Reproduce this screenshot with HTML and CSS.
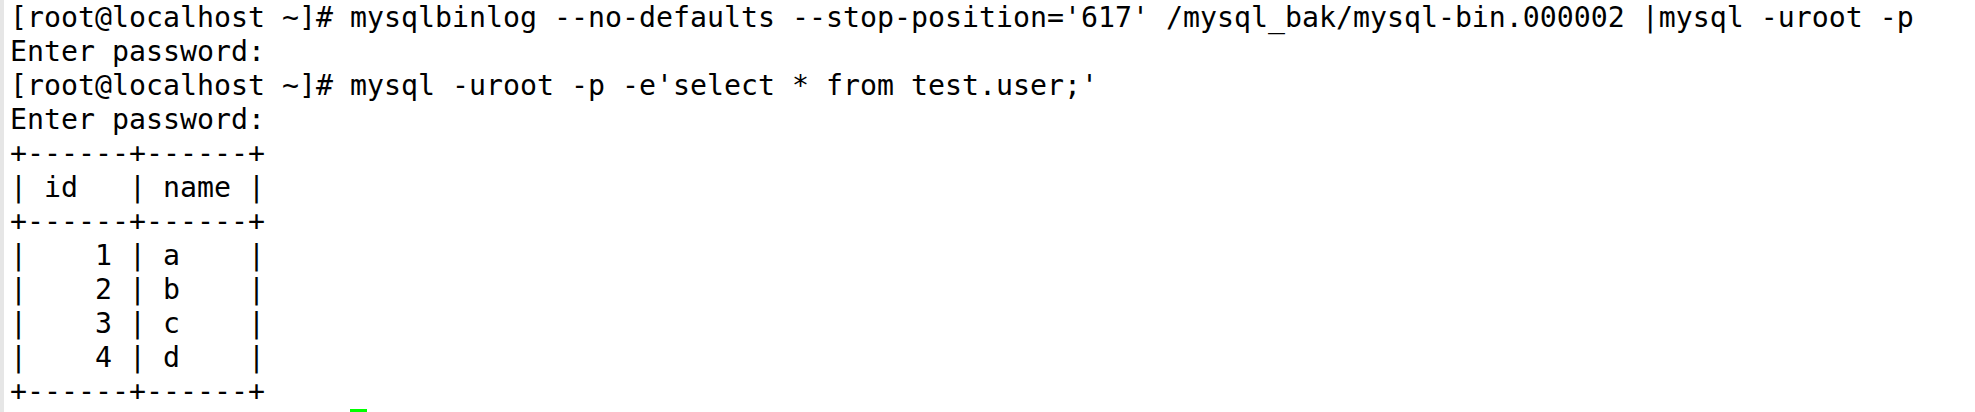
FILE: index.html
```html
<!DOCTYPE html>
<html>
<head>
<meta charset="utf-8">
<link rel="stylesheet" href="styles.css">
</head>
<body>
<div class="term"><pre class="screen">[root@localhost ~]# mysqlbinlog --no-defaults --stop-position='617' /mysql_bak/mysql-bin.000002 |mysql -uroot -p
Enter password:
[root@localhost ~]# mysql -uroot -p -e'select * from test.user;'
Enter password:
+------+------+
| id   | name |
+------+------+
|    1 | a    |
|    2 | b    |
|    3 | c    |
|    4 | d    |
+------+------+
                    <span class="cursor"> </span></pre></div>
</body>
</html>
```
FILE: styles.css
```css
html, body {
  margin: 0;
  padding: 0;
  background: #ffffff;
}
.term {
  width: 1975px;
  height: 412px;
  overflow: hidden;
  box-sizing: border-box;
  border-left: 4px solid #e6e6e6;
  padding: 1px 0 0 6px;
  background: #ffffff;
}
.screen {
  margin: 0;
  font-family: "DejaVu Sans Mono", monospace;
  font-size: 28.24px;
  line-height: 34px;
  color: #000000;
  white-space: pre;
}
.cursor {
  display: inline-block;
  width: 17px;
  height: 34px;
  vertical-align: top;
  background: #00ff00;
}
```
